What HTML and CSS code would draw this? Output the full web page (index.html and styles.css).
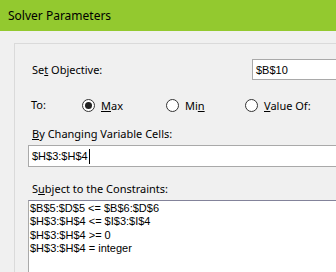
FILE: index.html
```html
<!DOCTYPE html>
<html lang="en">
<head>
    <meta charset="UTF-8">
    <meta name="viewport" content="width=device-width, initial-scale=1.0">
    <title>Solver Parameters</title>
    <link rel="stylesheet" href="styles.css">
</head>
<body>
    <div class="titlebar">Solver Parameters</div>

    <div class="panel">
        <div class="row objective-row">
            <span class="label">Se<u>t</u> Objective:</span>
            <div class="textbox objective">$B$10</div>
        </div>

        <div class="row radio-row">
            <span class="label to-label">To:</span>
            <label class="radio radio-max"><span class="dot checked"></span><span><u>M</u>ax</span></label>
            <label class="radio radio-min"><span class="dot"></span><span>Mi<u>n</u></span></label>
            <label class="radio radio-value"><span class="dot"></span><span><u>V</u>alue Of:</span></label>
        </div>

        <div class="label section-label changing-label"><u>B</u>y Changing Variable Cells:</div>
        <div class="textbox changing">$H$3:$H$4<span class="caret"></span></div>

        <div class="label section-label subject-label">S<u>u</u>bject to the Constraints:</div>
        <ul class="constraints">
            <li>$B$5:$D$5 &lt;= $B$6:$D$6</li>
            <li>$H$3:$H$4 &lt;= $I$3:$I$4</li>
            <li>$H$3:$H$4 &gt;= 0</li>
            <li>$H$3:$H$4 = integer</li>
        </ul>
    </div>
</body>
</html>
```

FILE: styles.css
```css
:root {
  --green: #93c92f;
  --bg: #f0f0f0;
  --field-border: #a9a9a9;
  --text: #000;
}

* {
  box-sizing: border-box;
  margin: 0;
  padding: 0;
}

html, body {
  height: 100%;
}

body {
  background: var(--bg);
  font-family: 'Noto Sans', sans-serif;
  font-size: 11px;
  color: var(--text);
  overflow: hidden;
  display: flex;
  flex-direction: column;
}

.titlebar {
  height: 31px;
  flex-shrink: 0;
  background: var(--green);
  padding-left: 8px;
  font-size: 12px;
  line-height: 31px;
}

.panel {
  flex: 1;
  display: flex;
  flex-direction: column;
  margin-left: 14px;
  margin-top: 12px;
  border-top: 1px solid #dadada;
  border-left: 1px solid #dadada;
  padding-left: 13px;
  padding-top: 15px;
}

.label {
  padding-left: 4px;
  line-height: 16px;
}

.row {
  display: flex;
  align-items: center;
}

.objective-row {
  height: 21px;
}

.objective-row .label {
  width: 224px;
}

.textbox {
  background: #fff;
  border: 1px solid var(--field-border);
  border-right: none;
  font-family: 'Liberation Sans', Arial, sans-serif;
  font-size: 11px;
  padding-left: 3px;
  display: flex;
  align-items: center;
}

.objective {
  height: 21px;
  flex: 1;
}

.radio-row {
  height: 20px;
  margin-top: 15px;
}

.to-label {
  padding-left: 3px;
  width: 54px;
}

.radio {
  display: flex;
  align-items: center;
  gap: 6px;
}

.radio-max {
  width: 84px;
}

.radio-min {
  width: 79px;
}

.dot {
  width: 13px;
  height: 13px;
  border: 1px solid #333;
  border-radius: 50%;
  background: #fff;
  display: flex;
  align-items: center;
  justify-content: center;
}

.dot.checked::after {
  content: "";
  width: 7px;
  height: 7px;
  border-radius: 50%;
  background: #222;
}

.changing-label {
  margin-top: 11px;
}

.changing {
  height: 22px;
  margin-top: 3px;
}

.caret {
  width: 1px;
  height: 15px;
  background: #000;
  margin-left: 1px;
}

.subject-label {
  margin-top: 14px;
}

.constraints {
  flex: 1;
  list-style: none;
  margin-top: 3px;
  background: #fff;
  border-left: 1px solid var(--field-border);
  border-top: 1px solid #83839a;
  padding: 1px 0 0 1px;
  font-family: 'Liberation Sans', Arial, sans-serif;
  font-size: 11px;
  line-height: 13.4px;
}
```
